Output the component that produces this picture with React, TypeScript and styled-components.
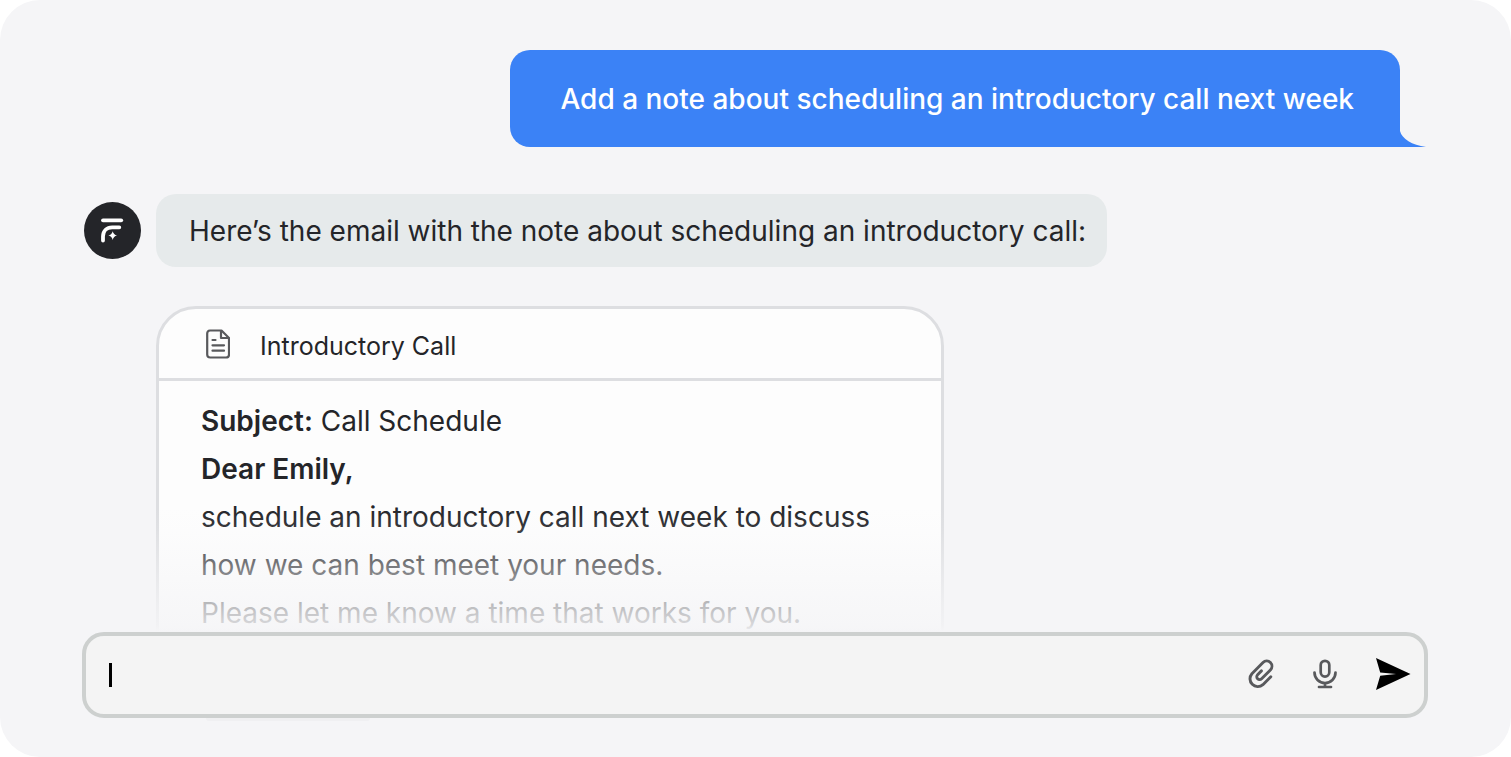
import React from "react";
import styled, { createGlobalStyle } from "styled-components";

const GlobalStyle = createGlobalStyle`
  * { box-sizing: border-box; }
  body { margin: 0; background: #ffffff; font-family: Inter, "Liberation Sans", sans-serif; color: #242529; }
`;

const Panel = styled.main`
  display: flex;
  flex-direction: column;
  height: 100vh;
  min-height: 480px;
  padding: 50px 83px 39px 82px;
  border-radius: 40px;
  background: #f5f5f7;
`;

const Conversation = styled.section`
  flex: 1;
  min-height: 0;
  display: flex;
  flex-direction: column;
  position: relative;
  overflow: hidden;
  padding-left: 2px;
`;

const UserMessage = styled.p`
  position: relative;
  align-self: flex-end;
  margin: 0 28px 0 0;
  padding: 25px 46px 24px 50px;
  border-radius: 20px 20px 0 20px;
  background: #3b82f6;
  color: #ffffff;
  font-size: 28px;
  font-weight: 500;
  line-height: 48px;
`;

const Tail = styled.svg`
  position: absolute;
  left: 100%;
  bottom: 0;
  margin-left: -1px;
  width: 27px;
  height: 16px;
`;

const ReplyRow = styled.div`
  display: flex;
  align-items: center;
  gap: 15px;
  margin-top: 47px;
`;

const Avatar = styled.svg`
  flex: none;
  width: 57px;
  height: 57px;
`;

const ReplyMessage = styled.p`
  margin: 0;
  padding: 13px 21px 12px 33px;
  border-radius: 20px;
  background: #e6eaeb;
  font-size: 28px;
  line-height: 48px;
`;

const EmailCard = styled.article`
  flex: none;
  width: 788px;
  max-width: calc(100% - 72px);
  margin: 39px 0 0 72px;
  border: 3px solid #dddee1;
  border-radius: 40px;
  background: #fdfdfd;
`;

const CardHeader = styled.header`
  display: flex;
  align-items: center;
  gap: 30px;
  height: 72px;
  padding: 0 47px;
  border-bottom: 3px solid #dddee1;
`;

const DocumentIcon = styled.svg`
  flex: none;
  width: 24px;
  height: 30px;
`;

const CardTitle = styled.h2`
  margin: 0;
  padding-top: 4px;
  font-size: 25px;
  font-weight: 400;
  line-height: 32px;
`;

const CardBody = styled.div`
  padding: 16px 42px 48px;
  font-size: 28px;
  line-height: 48px;

  p { margin: 0; }
  strong { font-weight: 600; }
`;

const Fade = styled.div`
  position: absolute;
  inset: auto 0 0 0;
  height: 136px;
  background: linear-gradient(
    to bottom,
    rgba(245, 245, 247, 0) 8%,
    rgba(245, 245, 247, 0.1) 24%,
    rgba(245, 245, 247, 0.4) 51%,
    rgba(245, 245, 247, 0.72) 80%,
    rgba(245, 245, 247, 0.86) 95%,
    #f5f5f7 100%
  );
`;

const Composer = styled.form`
  position: relative;
  flex: none;
  display: flex;
  align-items: center;
  height: 86px;
  padding: 0 13px 0 23px;
  border: 4px solid #cdd0cf;
  border-radius: 22px;
  background: #f4f4f4;

  &::after {
    content: "";
    position: absolute;
    top: 100%;
    left: 120px;
    width: 164px;
    height: 3px;
    margin-top: 4px;
    border-radius: 0 0 12px 12px;
    background: #f0f0f2;
  }
`;

const Caret = styled.span`
  width: 3px;
  height: 24px;
  background: #000000;
`;

const MessageInput = styled.input`
  flex: 1;
  min-width: 0;
  height: 60px;
  padding: 0;
  border: 0;
  outline: 0;
  background: transparent;
  font: 28px Inter, "Liberation Sans", sans-serif;
`;

const Actions = styled.div`
  display: flex;
  align-items: center;
  gap: 39px;
  padding-bottom: 2px;
`;

const IconButton = styled.button<{ $solid?: boolean }>`
  display: flex;
  padding: 0;
  border: 0;
  background: transparent;
  color: ${(p) => (p.$solid ? "#000000" : "#58595c")};
  cursor: pointer;
`;

const lineStyle = {
  fill: "none",
  stroke: "currentColor",
  strokeLinecap: "round",
  strokeLinejoin: "round",
} as const;

export default function App() {
  return (
    <>
      <GlobalStyle />
      <Panel>
        <Conversation>
          <UserMessage>
            Add a note about scheduling an introductory call next week
            <Tail viewBox="0 0 27 16" aria-hidden="true">
              <path d="M0 0H1C3 8 13 14 27 16H0Z" fill="#3b82f6" />
            </Tail>
          </UserMessage>
          <ReplyRow>
            <Avatar viewBox="0 0 57 57" role="img" aria-label="Assistant">
              <circle cx="28.5" cy="28.5" r="28.5" fill="#242529" />
              <g fill="none" stroke="#ffffff" strokeWidth="3.8" strokeLinecap="round">
                <path d="M19 18.3H37.2" />
                <path d="M19 38.6V34.6C19 28.8 22.8 25.3 28.2 25.3H35.3" />
              </g>
              <path
                d="M28.7 29.3Q29.5 32.8 33 33.6Q29.5 34.4 28.7 37.9Q27.9 34.4 24.4 33.6Q27.9 32.8 28.7 29.3Z"
                fill="#ffffff"
              />
            </Avatar>
            <ReplyMessage>
              Here’s the email with the note about scheduling an introductory call:
            </ReplyMessage>
          </ReplyRow>
          <EmailCard>
            <CardHeader>
              <DocumentIcon viewBox="0 0 24 30" aria-hidden="true" color="#58595c" {...lineStyle} strokeWidth="2.2">
                <path d="M4 1.5H15.5L23 9V25.5A3 3 0 0 1 20 28.5H4.2A3 3 0 0 1 1.2 25.5V4.5A3 3 0 0 1 4 1.5Z" />
                <path d="M15 2V9H22.5" />
                <path d="M6.5 11H9.5M6.5 16.3H18M6.5 21.7H18" />
              </DocumentIcon>
              <CardTitle>Introductory Call</CardTitle>
            </CardHeader>
            <CardBody>
              <p><strong>Subject:</strong> Call Schedule</p>
              <p><strong>Dear Emily,</strong></p>
              <p>schedule an introductory call next week to discuss</p>
              <p>how we can best meet your needs.</p>
              <p>Please let me know a time that works for you.</p>
            </CardBody>
          </EmailCard>
          <Fade />
        </Conversation>
        <Composer onSubmit={(e) => e.preventDefault()}>
          <Caret />
          <MessageInput type="text" aria-label="Message" />
          <Actions>
            <IconButton type="button" aria-label="Attach a file">
              <svg width="26" height="30" viewBox="0 0 26 30" {...lineStyle} strokeWidth="2.9">
                <path d="M22.8 17.8L14.9 25.7A7.8 7.8 0 0 1 3.9 14.7L15 3.5A5.2 5.2 0 0 1 22.4 10.9L13.6 19.7A2.8 2.8 0 0 1 9.6 15.7L13.4 11.9" />
              </svg>
            </IconButton>
            <IconButton type="button" aria-label="Record a voice message">
              <svg width="24" height="30" viewBox="0 0 24 30" {...lineStyle} strokeWidth="2.7">
                <rect x="7.7" y="1.8" width="8.6" height="15.8" rx="4.3" />
                <path d="M1.5 13.6A10.5 10.5 0 0 0 22.5 13.6M12 24.1V28M6 28H18" />
              </svg>
            </IconButton>
            <IconButton type="submit" aria-label="Send" $solid>
              <svg width="35" height="32" viewBox="0 0 35 32" fill="currentColor">
                <path d="M0 0L34.5 16L0 32L4.2 17.8L20 16L4.2 14.4Z" />
              </svg>
            </IconButton>
          </Actions>
        </Composer>
      </Panel>
    </>
  );
}
